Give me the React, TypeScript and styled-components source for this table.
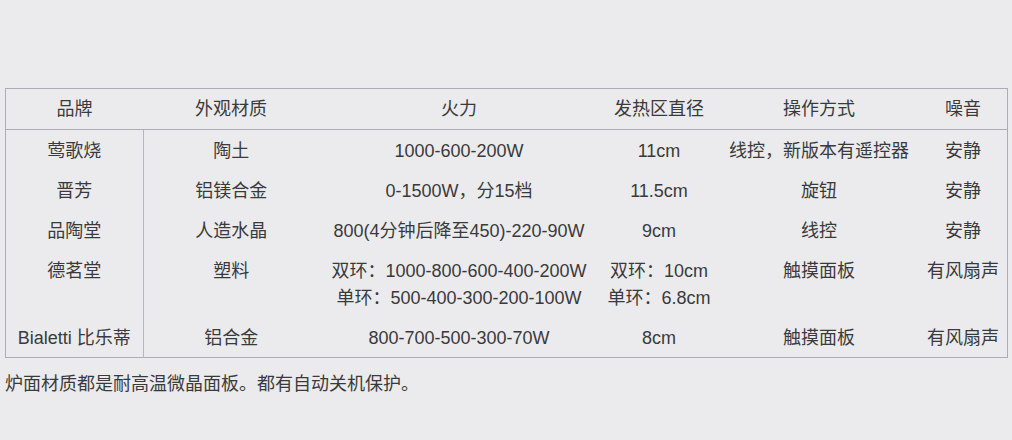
import { createGlobalStyle } from 'styled-components';
import styled from 'styled-components';

const GlobalStyle = createGlobalStyle`
  html, body {
    margin: 0;
    padding: 0;
    background: #ebebed;
  }
  body {
    font-family: "Liberation Sans", "Noto Sans CJK SC", sans-serif;
    color: #3a3a3c;
  }
`;

const Page = styled.div`
  width: 1012px;
  height: 440px;
  padding: 88px 0 0 5px;
  box-sizing: border-box;
`;

const Table = styled.table`
  width: 1001px;
  border-collapse: collapse;
  border: 1.5px solid #adadb8;
  table-layout: fixed;
  font-size: 18px;
  line-height: 27px;
`;

const HeadCell = styled.th<{ $width: number }>`
  width: ${(p) => p.$width}px;
  height: 40px;
  padding: 0;
  font-weight: normal;
  text-align: center;
  vertical-align: middle;
  border-bottom: 1.5px solid #adadb8;
  white-space: nowrap;
`;

const Cell = styled.td<{ $divider?: boolean }>`
  padding: 8px 0 5px;
  text-align: center;
  vertical-align: top;
  white-space: nowrap;
  border-right: ${(p) => (p.$divider ? '1.5px solid #b6b6c0' : 'none')};
`;

const Line = styled.div`
  display: block;
`;

const Note = styled.p`
  margin: 13px 0 0;
  font-size: 18px;
  line-height: 27px;
`;

const columns = [
  { title: '品牌', width: 137 },
  { title: '外观材质', width: 176 },
  { title: '火力', width: 280 },
  { title: '发热区直径', width: 120 },
  { title: '操作方式', width: 200 },
  { title: '噪音', width: 88 },
];

const rows: string[][][] = [
  [['莺歌烧'], ['陶土'], ['1000-600-200W'], ['11cm'], ['线控，新版本有遥控器'], ['安静']],
  [['晋芳'], ['铝镁合金'], ['0-1500W，分15档'], ['11.5cm'], ['旋钮'], ['安静']],
  [['品陶堂'], ['人造水晶'], ['800(4分钟后降至450)-220-90W'], ['9cm'], ['线控'], ['安静']],
  [
    ['德茗堂'],
    ['塑料'],
    ['双环：1000-800-600-400-200W', '单环：500-400-300-200-100W'],
    ['双环：10cm', '单环：6.8cm'],
    ['触摸面板'],
    ['有风扇声'],
  ],
  [['Bialetti 比乐蒂'], ['铝合金'], ['800-700-500-300-70W'], ['8cm'], ['触摸面板'], ['有风扇声']],
];

const App = () => {
  return (
    <Page>
      <GlobalStyle />
      <Table>
        <thead>
          <tr>
            {columns.map((col) => (
              <HeadCell key={col.title} $width={col.width}>
                {col.title}
              </HeadCell>
            ))}
          </tr>
        </thead>
        <tbody>
          {rows.map((row, i) => (
            <tr key={i}>
              {row.map((lines, j) => (
                <Cell key={j} $divider={j === 0}>
                  {lines.map((text) => (
                    <Line key={text}>{text}</Line>
                  ))}
                </Cell>
              ))}
            </tr>
          ))}
        </tbody>
      </Table>
      <Note>炉面材质都是耐高温微晶面板。都有自动关机保护。</Note>
    </Page>
  );
};

export default App;
